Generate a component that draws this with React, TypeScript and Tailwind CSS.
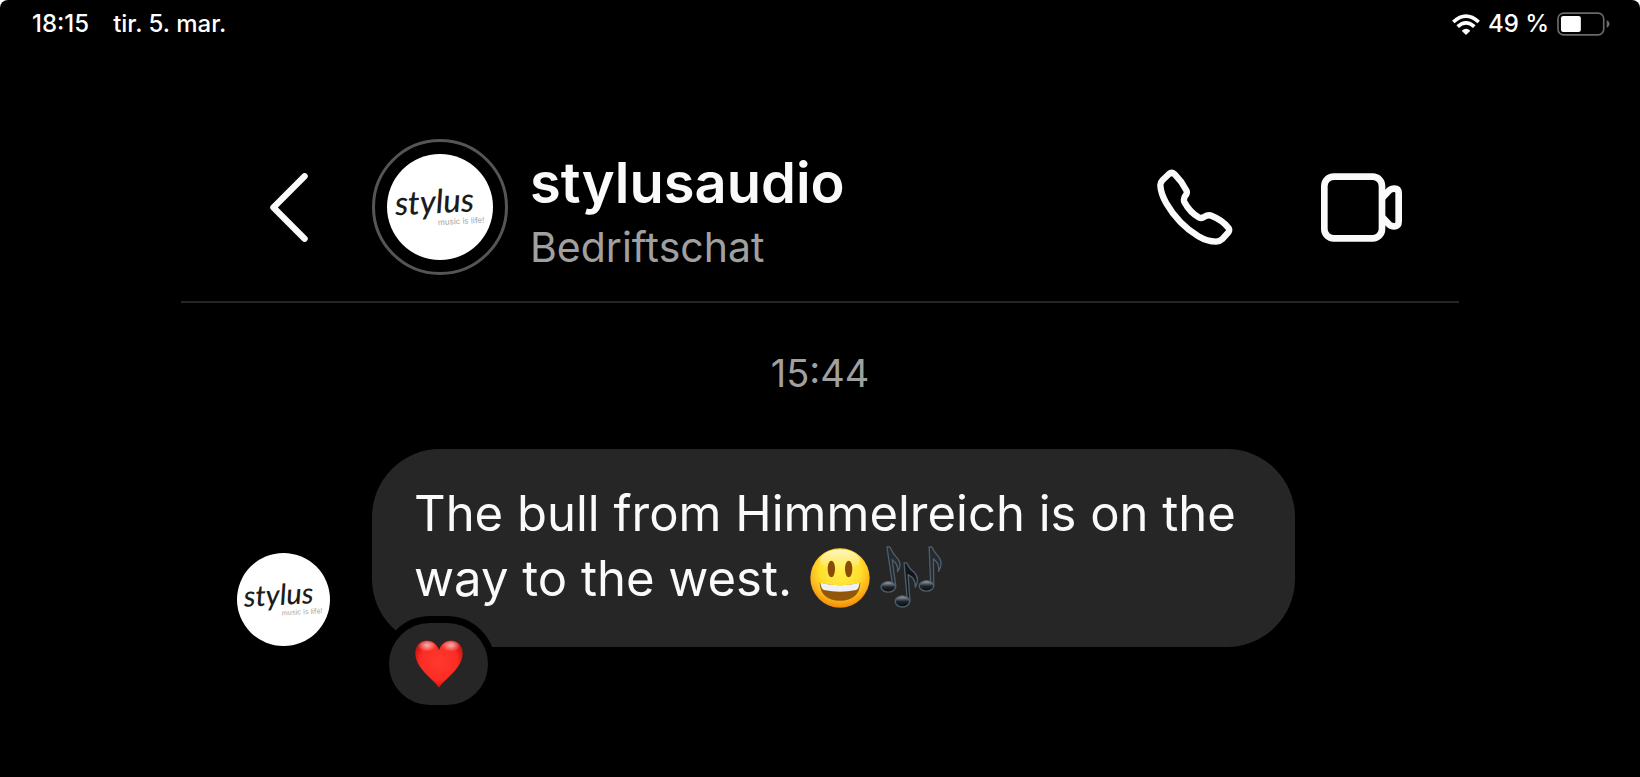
import type { ReactNode } from 'react';

const contact = {
  name: 'stylusaudio',
  subtitle: 'Bedriftschat',
};

const message = {
  time: '15:44',
  text: 'The bull from Himmelreich is on the way to the west.',
};

function WifiIcon() {
  return (
    <svg viewBox="63 40 84 63" className="h-[21px] w-7" fill="none" aria-label="Wi-Fi">
      <path d="M67 64Q105 29 143 64" stroke="#fff" strokeWidth="11" />
      <path d="M80 78Q105 55 130 78" stroke="#fff" strokeWidth="11" />
      <path d="M92 90Q105 78 118 90L105 103Z" fill="#fff" />
    </svg>
  );
}

function BatteryIcon() {
  return (
    <svg viewBox="381 36 160 72" className="h-6 w-[53px]" fill="none" aria-hidden="true">
      <rect x="384" y="39" width="138" height="66" rx="17" stroke="#6a6a6a" strokeWidth="5" />
      <rect x="393" y="48" width="60" height="48" rx="7" fill="#fff" />
      <path d="M531 60Q540 64 540 72Q540 80 531 84Z" fill="#6a6a6a" />
    </svg>
  );
}

function StatusBar() {
  return (
    <div className="flex items-center justify-between pt-2 pr-[30px] pl-8 text-2xl leading-8 font-medium text-white">
      <div className="flex gap-6">
        <time>18:15</time>
        <span>tir. 5. mar.</span>
      </div>
      <div className="flex items-center gap-2">
        <WifiIcon />
        <span>49 %</span>
        <BatteryIcon />
      </div>
    </div>
  );
}

function StylusLogo({ className }: { className: string }) {
  return (
    <svg viewBox="0 0 106 106" className={className} role="img" aria-label="Stylus, music is life!">
      <circle cx="53" cy="53" r="53" fill="#fff" />
      <g transform="rotate(-3 53 53)">
        <text
          x="8"
          y="59"
          fontSize="33"
          fontStyle="italic"
          fontWeight="500"
          fontFamily="Lato, 'Open Sans', sans-serif"
          fill="#1c1c1c"
        >
          stylus
        </text>
        <text x="50" y="71" fontSize="8" fontFamily="Inter, sans-serif" fill="#a3a3a3">
          music is life!
        </text>
      </g>
    </svg>
  );
}

function IconButton({ label, children }: { label: string; children: ReactNode }) {
  return (
    <button type="button" aria-label={label} className="shrink-0 cursor-pointer">
      {children}
    </button>
  );
}

function BackIcon() {
  return (
    <svg viewBox="89 128 114 208" className="h-[69px] w-[38px]" fill="none">
      <path
        d="M193 138L99 232L193 326"
        stroke="#fafafa"
        strokeWidth="19"
        strokeLinecap="round"
        strokeLinejoin="round"
      />
    </svg>
  );
}

function PhoneIcon() {
  return (
    <svg viewBox="81 57 228 228" className="size-[76px]" fill="none">
      <path
        d="M117 72Q125 65 134 73Q155 94 169 121Q173 128 167 136Q159 146 163 156Q180 188 208 203Q215 206 224 200Q235 193 246 198Q276 210 295 233Q300 240 295 247L276 268Q270 274 258 275Q232 275 205 259Q145 222 109 160Q92 130 91 105Q91 97 98 90Z"
        stroke="#fafafa"
        strokeWidth="19"
        strokeLinejoin="round"
      />
    </svg>
  );
}

function VideoIcon() {
  return (
    <svg viewBox="573 69 243 207" className="h-[69px] w-[81px]" fill="none" stroke="#fafafa" strokeWidth="20">
      <rect x="583" y="80" width="173" height="185" rx="28" />
      <path d="M758 142L777 122Q783 116 793 116Q806 116 806 130V214Q806 229 793 229Q783 229 777 223L758 203" />
    </svg>
  );
}

function ChatHeader() {
  return (
    <header className="flex items-center border-b-2 border-[#262626] pt-[99px] pr-[57px] pb-[26px] pl-[89px]">
      <IconButton label="Tilbake">
        <BackIcon />
      </IconButton>
      <div className="ml-16 flex size-[136px] shrink-0 items-center justify-center rounded-full border-3 border-[#555]">
        <StylusLogo className="size-[106px]" />
      </div>
      <div className="ml-[22px] min-w-0 flex-1">
        <h1 className="text-[56px] leading-[80px] font-semibold text-[#fafafa]">{contact.name}</h1>
        <p className="text-[41px] leading-[48px] text-[#a0a0a0]">{contact.subtitle}</p>
      </div>
      <div className="flex items-center gap-[88px]">
        <IconButton label="Ring">
          <PhoneIcon />
        </IconButton>
        <IconButton label="Videosamtale">
          <VideoIcon />
        </IconButton>
      </div>
    </header>
  );
}

function SmileEmoji() {
  return (
    <svg viewBox="32 51 180 180" className="ml-1 inline-block size-[60px] align-[-12px]" role="img" aria-label="😃">
      <defs>
        <radialGradient id="face" cx="0.5" cy="0.36" r="0.64">
          <stop offset="0" stopColor="#fff04a" />
          <stop offset="0.55" stopColor="#ffdf2c" />
          <stop offset="0.8" stopColor="#fdb51b" />
          <stop offset="1" stopColor="#f18a05" />
        </radialGradient>
        <linearGradient id="shine" x1="0" y1="0" x2="0" y2="1">
          <stop offset="0" stopColor="#fff" stopOpacity="0.7" />
          <stop offset="1" stopColor="#fff" stopOpacity="0" />
        </linearGradient>
      </defs>
      <circle cx="122" cy="141" r="89" fill="url(#face)" />
      <ellipse cx="122" cy="88" rx="60" ry="32" fill="url(#shine)" />
      <ellipse cx="96" cy="114" rx="11" ry="25" fill="#8a4b05" />
      <ellipse cx="148" cy="114" rx="11" ry="25" fill="#8a4b05" />
      <path d="M61 155Q122 170 183 155Q180 208 122 209Q64 208 61 155Z" fill="#925708" />
      <path d="M63 155Q122 170 181 155Q179 173 170 177Q122 188 74 177Q65 173 63 155Z" fill="#eef1f8" />
    </svg>
  );
}

function NotesEmoji() {
  return (
    <svg
      viewBox="243 47 188 188"
      className="ml-2.5 inline-block size-[62px] align-[-12px]"
      role="img"
      aria-label="🎶"
      stroke="#4d5f6d"
      strokeWidth="4"
      strokeLinejoin="round"
    >
      <defs>
        <linearGradient id="note" x1="0" y1="0" x2="0" y2="1">
          <stop offset="0" stopColor="#a9b3ba" />
          <stop offset="0.5" stopColor="#20262c" />
          <stop offset="1" stopColor="#08090b" />
        </linearGradient>
      </defs>
      <path d="M264 50L273 50Q282 70 297 86Q311 104 296 125Q300 103 280 88L291 170L282 170Z" fill="#252b31" />
      <path d="M316 98L324 98Q331 116 348 128Q364 147 350 172Q353 147 328 134L334 214L326 214Z" fill="#151519" />
      <path d="M392 50L400 50Q408 67 421 80Q436 99 420 124Q425 101 405 86L406 168L397 168Z" fill="#252b31" />
      <ellipse cx="268" cy="171" rx="22" ry="16" fill="url(#note)" />
      <ellipse cx="311" cy="215" rx="22" ry="17" fill="url(#note)" />
      <ellipse cx="384" cy="168" rx="22" ry="16" fill="url(#note)" />
    </svg>
  );
}

function HeartEmoji() {
  return (
    <svg viewBox="102 93 146 146" className="size-12" role="img" aria-label="❤️">
      <defs>
        <radialGradient id="heart" cx="0.5" cy="0.45" r="0.6">
          <stop offset="0" stopColor="#ff3a30" />
          <stop offset="0.65" stopColor="#fb2c24" />
          <stop offset="1" stopColor="#b90d0a" />
        </radialGradient>
        <radialGradient id="gloss" cx="0.5" cy="0.35" r="0.55">
          <stop offset="0" stopColor="#fff" stopOpacity="0.65" />
          <stop offset="1" stopColor="#fff" stopOpacity="0" />
        </radialGradient>
      </defs>
      <path
        d="M175 238C160 213 103 180 103 133C103 86 162 80 175 124C188 80 247 86 247 133C247 180 190 213 175 238Z"
        fill="url(#heart)"
      />
      <ellipse cx="138" cy="114" rx="27" ry="18" fill="url(#gloss)" />
      <ellipse cx="212" cy="114" rx="27" ry="18" fill="url(#gloss)" />
    </svg>
  );
}

function Message() {
  return (
    <div className="flex items-end pr-[164px] pl-14">
      <StylusLogo className="mb-px size-[93px] shrink-0" />
      <div className="relative ml-[42px] min-w-0 flex-1 rounded-[68px] bg-[#262626] px-[42px] pt-8 pb-9">
        <p className="text-[49px] leading-[65px] text-[#fafafa]">
          {message.text} <SmileEmoji />
          <NotesEmoji />
        </p>
        <button
          type="button"
          aria-label="Reaksjoner"
          className="absolute -bottom-[65px] left-[10px] flex h-24 w-[113px] cursor-pointer items-center justify-center rounded-[48px] border-7 border-black bg-[#262626]"
        >
          <HeartEmoji />
        </button>
      </div>
    </div>
  );
}

export default function App() {
  return (
    <div className="bg-white">
      <div className="min-h-screen rounded-t-lg bg-black pb-32 font-['Inter','Noto_Sans',sans-serif]">
        <StatusBar />
        <main className="mx-auto w-full max-w-[1278px]">
          <ChatHeader />
          <time className="mt-[46px] mb-[52px] block text-center text-[38px] leading-[48px] text-[#a0a0a0]">
            {message.time}
          </time>
          <Message />
        </main>
      </div>
    </div>
  );
}
